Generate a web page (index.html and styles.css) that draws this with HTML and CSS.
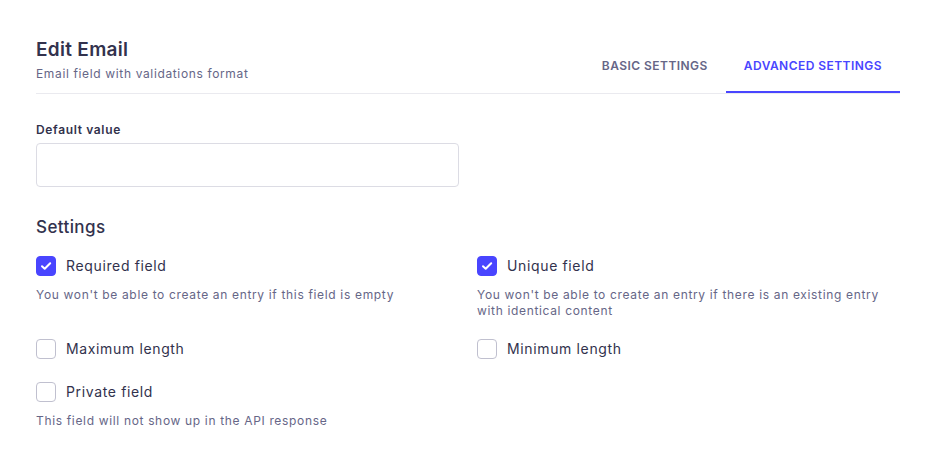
FILE: index.html
```html
<!DOCTYPE html>
<html lang="en">
<head>
<meta charset="utf-8">
<title>Edit Email</title>
<link rel="stylesheet" href="styles.css">
</head>
<body>
<div class="modal">
  <header class="header">
    <div class="heading">
      <h1 class="title">Edit Email</h1>
      <p class="subtitle">Email field with validations format</p>
    </div>
    <nav class="tabs">
      <button class="tab">BASIC SETTINGS</button>
      <button class="tab tab-active">ADVANCED SETTINGS</button>
    </nav>
  </header>

  <section class="content">
    <div class="field">
      <label class="field-label" for="dv">Default value</label>
      <input class="text-input" id="dv" type="text">
    </div>

    <h2 class="section-title">Settings</h2>

    <div class="grid">
      <div class="cell">
        <label class="check">
          <span class="box box-on"><svg viewBox="0 0 20 20" width="20" height="20"><path d="M6 10.2l2.7 2.6L14.2 7.3" fill="none" stroke="#fff" stroke-width="2" stroke-linecap="round" stroke-linejoin="round"/></svg></span>
          <span class="check-text">Required field</span>
        </label>
        <p class="hint">You won't be able to create an entry if this field is empty</p>
      </div>
      <div class="cell">
        <label class="check">
          <span class="box box-on"><svg viewBox="0 0 20 20" width="20" height="20"><path d="M6 10.2l2.7 2.6L14.2 7.3" fill="none" stroke="#fff" stroke-width="2" stroke-linecap="round" stroke-linejoin="round"/></svg></span>
          <span class="check-text">Unique field</span>
        </label>
        <p class="hint">You won't be able to create an entry if there is an existing entry with identical content</p>
      </div>
      <div class="cell">
        <label class="check">
          <span class="box"></span>
          <span class="check-text">Maximum length</span>
        </label>
      </div>
      <div class="cell">
        <label class="check">
          <span class="box"></span>
          <span class="check-text">Minimum length</span>
        </label>
      </div>
      <div class="cell">
        <label class="check">
          <span class="box"></span>
          <span class="check-text">Private field</span>
        </label>
        <p class="hint">This field will not show up in the API response</p>
      </div>
    </div>
  </section>
</div>
</body>
</html>
```

FILE: styles.css
```css
* { box-sizing: border-box; }
html, body {
  margin: 0;
  padding: 0;
  background: #ffffff;
}
body {
  font-family: Inter, "Noto Sans", "Liberation Sans", sans-serif;
  color: #32324d;
}
.modal {
  width: 936px;
  height: 466px;
  padding: 0 36px;
  overflow: hidden;
}
.header {
  display: flex;
  justify-content: space-between;
  align-items: flex-end;
  border-bottom: 1px solid #eaeaef;
  padding-top: 38px;
}
.heading {
  padding-bottom: 11px;
}
.title {
  margin: 0;
  font-size: 19px;
  line-height: 24px;
  font-weight: 600;
  letter-spacing: 0.3px;
  color: #32324d;
}
.subtitle {
  margin: 4px 0 0;
  font-size: 12px;
  line-height: 16px;
  letter-spacing: 0.64px;
  color: #666687;
}
.tabs {
  display: flex;
}
.tab {
  border: 0;
  background: none;
  font-family: inherit;
  font-size: 12px;
  line-height: 16px;
  font-weight: 600;
  color: #666687;
  padding: 0 18px 17px;
  border-bottom: 2px solid transparent;
  letter-spacing: 0.45px;
  cursor: pointer;
}
.tab-active {
  color: #4945ff;
  border-bottom-color: #4945ff;
}
.content {
  padding-top: 28px;
}
.field {
  display: flex;
  flex-direction: column;
  width: 423px;
}
.field-label {
  font-size: 12px;
  line-height: 16px;
  font-weight: 600;
  letter-spacing: 0.65px;
  color: #32324d;
}
.text-input {
  margin-top: 5px;
  height: 44px;
  border: 1px solid #dcdce4;
  border-radius: 4px;
  font-family: inherit;
  font-size: 14px;
  padding: 0 16px;
  outline: none;
}
.section-title {
  margin: 28px 0 0;
  font-size: 17px;
  line-height: 24px;
  font-weight: 500;
  letter-spacing: 0.4px;
  color: #32324d;
}
.grid {
  margin-top: 14px;
  display: grid;
  grid-template-columns: 423px 423px;
  column-gap: 18px;
  row-gap: 17px;
}
.check {
  display: flex;
  align-items: center;
  gap: 10px;
  height: 26px;
}
.box {
  width: 20px;
  height: 20px;
  border-radius: 4px;
  border: 1px solid #c0c0cf;
  background: #fff;
  display: flex;
  align-items: center;
  justify-content: center;
  flex-shrink: 0;
}
.box-on {
  background: #4945ff;
  border-color: #4945ff;
}
.box svg { display: block; flex-shrink: 0; }
.check-text {
  font-size: 14px;
  line-height: 20px;
  letter-spacing: 0.64px;
  color: #32324d;
}
.hint {
  margin: 8px 0 0;
  font-size: 12px;
  line-height: 16px;
  letter-spacing: 0.66px;
  color: #666687;
}
```
